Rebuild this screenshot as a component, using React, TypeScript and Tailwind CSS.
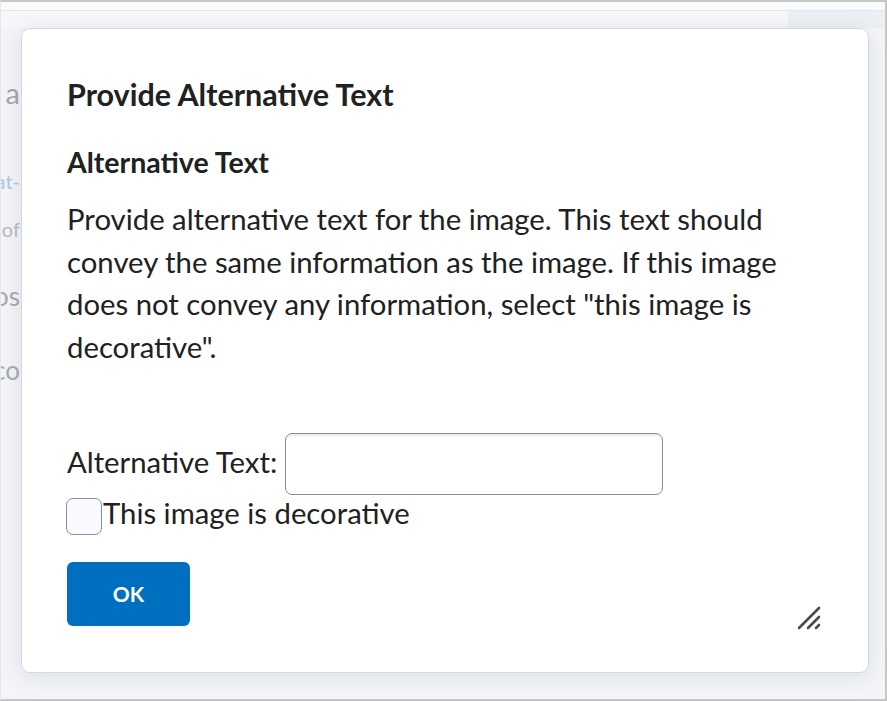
import React from "react";

function ResizeGrip() {
  return (
    <svg width="26" height="26" viewBox="0 0 26 26" className="text-[#4a4a4a]">
      <g stroke="currentColor" strokeWidth="2.6" strokeLinecap="round">
        <line x1="2" y1="23" x2="22" y2="3" />
        <line x1="11" y1="23" x2="22" y2="12" />
        <line x1="19" y1="23" x2="22" y2="20" />
      </g>
    </svg>
  );
}

export default function App() {
  return (
    <div
      className="relative h-[701px] w-[887px] overflow-hidden border-2 border-l border-[#c6c6c6] border-l-[#e4e6ea] bg-[#f3f5f8]"
      style={{ fontFamily: "Lato, 'Noto Sans', sans-serif" }}
    >
      {/* page behind the dialog */}
      <div className="flex h-full flex-col">
        <div className="h-[8px] bg-[#fafbfc]" />
        <div className="flex h-[18px] border-t border-[#e3e7ec]">
          <div className="flex-1 bg-[#f5f7f9]" />
          <div className="w-[97px] bg-[#eceff3]" />
        </div>
        <div className="flex w-[19px] flex-col overflow-hidden whitespace-nowrap">
          <div className="pt-[48px] text-right text-[29px] leading-[34px] text-[#a3a6a9]">a</div>
          <div className="-ml-[20px] pt-[59px] text-right text-[20px] leading-[24px] text-[#a9c9e6]">at-</div>
          <div className="-ml-[20px] pt-[24px] text-right text-[20px] leading-[24px] text-[#b9bbbd]">of</div>
          <div className="-ml-[20px] pt-[39px] text-right text-[26px] leading-[32px] text-[#a8aaad]">os</div>
          <div className="-ml-[20px] pt-[42px] text-right text-[26px] leading-[32px] text-[#a8aaad]">co</div>
        </div>
      </div>

      {/* dialog */}
      <div className="absolute left-[20px] top-[26px] flex h-[645px] w-[848px] flex-col rounded-[9px] border border-[#d3d9e2] bg-white pl-[45px] text-[#202122] shadow-[0_4px_22px_rgba(70,80,95,0.13)]">
        <h1 className="mt-[48px] text-[30.5px] font-bold leading-[34px]">Provide Alternative Text</h1>
        <h2 className="mt-[35px] text-[28.5px] font-bold leading-[32px]">Alternative Text</h2>
        <p className="mt-[20px] w-[740px] text-[29.3px] leading-[42.5px]">
          Provide alternative text for the image. This text should convey the same information as the image. If this image does not convey any information, select "this image is decorative".
        </p>
        <div className="mt-[65px] flex items-center gap-[8px] text-[29.3px]">
          <span className="-mt-[4px]">Alternative Text:</span>
          <input
            type="text"
            className="h-[62px] w-[378px] rounded-[7px] border border-[#8a8c8f] bg-white shadow-[inset_0_2px_0_0_#ededed] outline-none"
          />
        </div>
        <label className="mt-[2px] flex h-[38px] items-center text-[29.3px] leading-[38px]">
          <span className="-ml-[1px] h-[37px] w-[36px] shrink-0 rounded-[7px] border-[1.5px] border-[#8c9096] bg-[#f8faff]" />
          <span className="-mt-[6px] ml-[1px]">This image is decorative</span>
        </label>
        <div className="mt-[27px] flex">
          <button className="h-[64px] w-[123px] rounded-[6px] bg-[#006fbf] text-[21px] font-bold text-white">
            OK
          </button>
        </div>
        <div className="absolute bottom-[41px] right-[45px]">
          <ResizeGrip />
        </div>
      </div>
    </div>
  );
}
